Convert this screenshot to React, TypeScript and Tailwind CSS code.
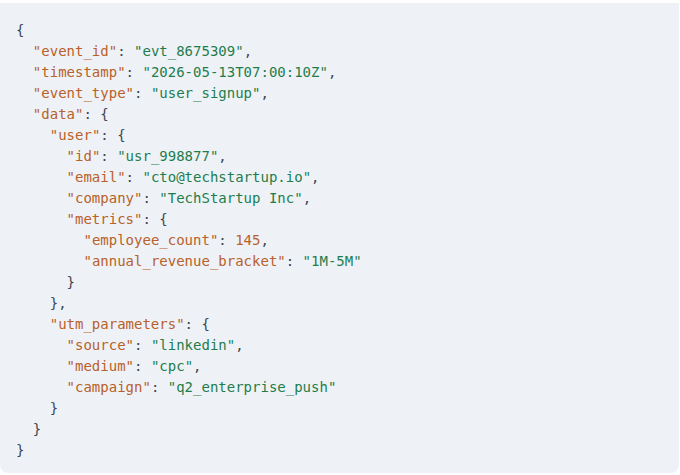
import React from "react"

type Json = string | number | { [k: string]: Json }

const payload: Json = {
    event_id: "evt_8675309",
    timestamp: "2026-05-13T07:00:10Z",
    event_type: "user_signup",
    data: {
        user: {
            id: "usr_998877",
            email: "cto@techstartup.io",
            company: "TechStartup Inc",
            metrics: {
                employee_count: 145,
                annual_revenue_bracket: "1M-5M",
            },
        },
        utm_parameters: {
            source: "linkedin",
            medium: "cpc",
            campaign: "q2_enterprise_push",
        },
    },
}

function Value({ value, depth }: { value: Json; depth: number }) {
    if (typeof value === "string") return <span className="text-[#1f7d4c]">"{value}"</span>
    if (typeof value === "number") return <span className="text-[#b8612a]">{value}</span>
    const entries = Object.entries(value)
    const pad = "  ".repeat(depth)
    return (
        <>
            {"{"}
            {"\n"}
            {entries.map(([k, v], i) => (
                <React.Fragment key={k}>
                    {pad + "  "}
                    <span className="text-[#b8612a]">"{k}"</span>
                    {": "}
                    <Value value={v} depth={depth + 1} />
                    {i < entries.length - 1 ? "," : ""}
                    {"\n"}
                </React.Fragment>
            ))}
            {pad + "}"}
        </>
    )
}

export default function App() {
    return (
        <div className="w-[680px] h-[475px] bg-white pt-[3px] pr-px overflow-hidden">
            <pre className="h-[470px] bg-[#eef2f7] rounded-b-lg px-4 pt-[17px] text-[14px] leading-[21px] text-[#3f4650] font-['DejaVu_Sans_Mono',monospace]">
                <Value value={payload} depth={0} />
            </pre>
        </div>
    )
}
